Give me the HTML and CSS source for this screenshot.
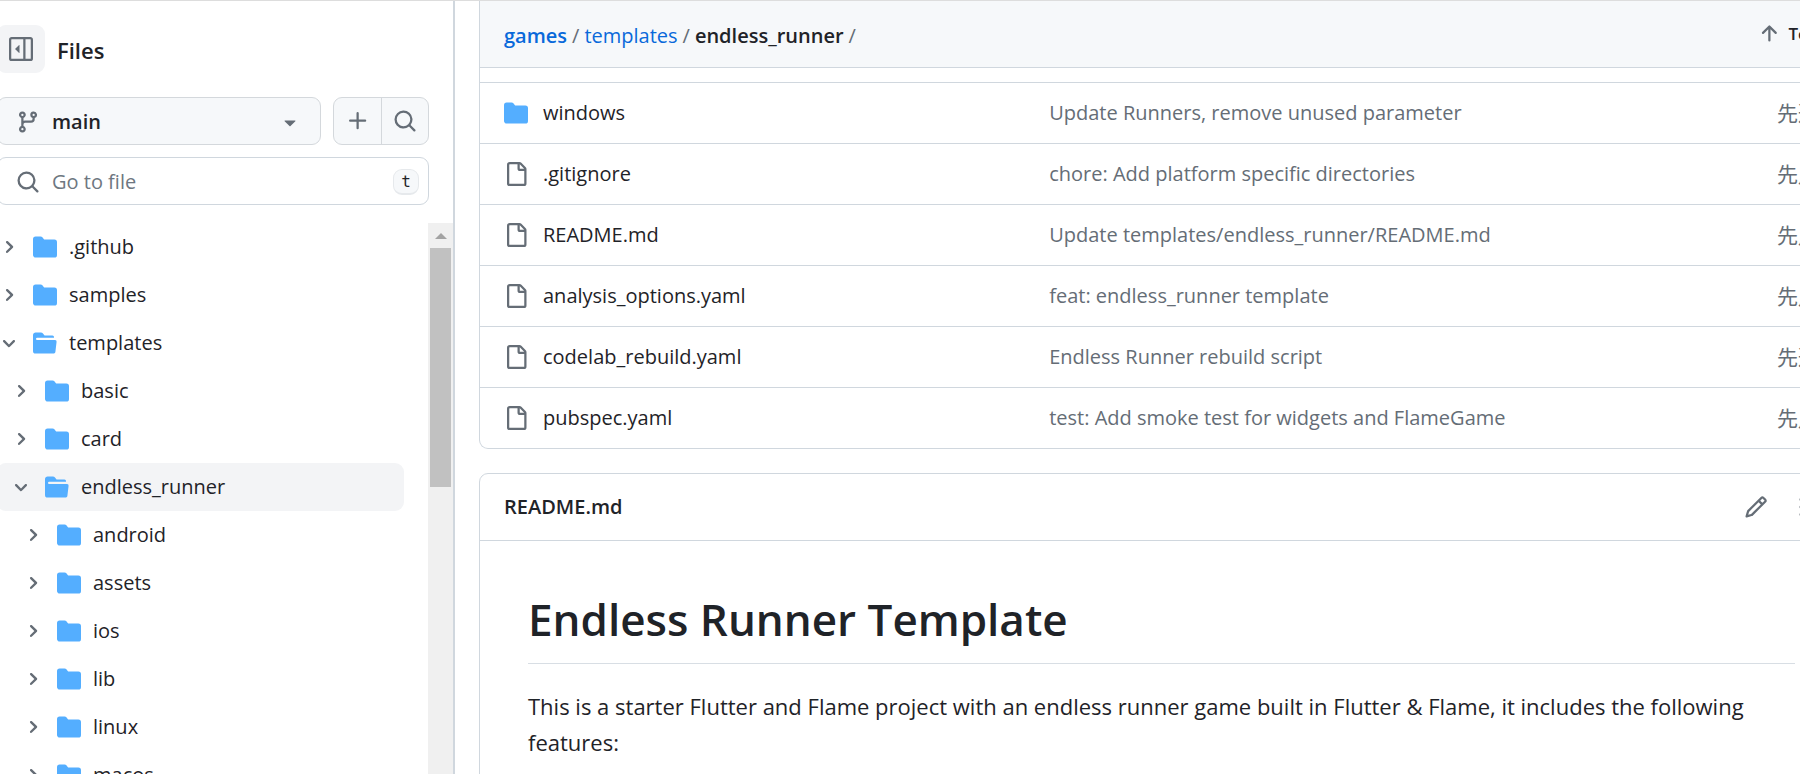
FILE: index.html
```
<!DOCTYPE html>
<html lang="en">
<head>
<meta charset="UTF-8">
<meta name="viewport" content="width=device-width, initial-scale=1.0">
<title>games/templates/endless_runner</title>
<link rel="stylesheet" href="styles.css">
</head>
<body>

<svg class="sprite" aria-hidden="true">
  <symbol id="i-sidebar" viewBox="0 0 16 16"><path d="m4.177 7.823 2.396-2.396A.25.25 0 0 1 7 5.604v4.792a.25.25 0 0 1-.427.177L4.177 8.177a.25.25 0 0 1 0-.354Z"/><path d="M0 1.75C0 .784.784 0 1.75 0h12.5C15.216 0 16 .784 16 1.75v12.5A1.75 1.75 0 0 1 14.25 16H1.75A1.75 1.75 0 0 1 0 14.25Zm1.75-.25a.25.25 0 0 0-.25.25v12.5c0 .138.112.25.25.25H9.5v-13Zm12.5 13a.25.25 0 0 0 .25-.25V1.75a.25.25 0 0 0-.25-.25H11v13Z"/></symbol>
  <symbol id="i-branch" viewBox="0 0 16 16"><path d="M9.5 3.25a2.25 2.25 0 1 1 3 2.122V6A2.5 2.5 0 0 1 10 8.5H6a1 1 0 0 0-1 1v1.128a2.251 2.251 0 1 1-1.5 0V5.372a2.25 2.25 0 1 1 1.5 0v1.836A2.493 2.493 0 0 1 6 7h4a1 1 0 0 0 1-1v-.628A2.25 2.25 0 0 1 9.5 3.25Zm-6 0a.75.75 0 1 0 1.5 0 .75.75 0 0 0-1.5 0Zm8.25-.75a.75.75 0 1 0 0 1.5.75.75 0 0 0 0-1.5ZM4.25 12a.75.75 0 1 0 0 1.5.75.75 0 0 0 0-1.5Z"/></symbol>
  <symbol id="i-caret" viewBox="0 0 16 16"><path d="m4.427 7.427 3.396 3.396a.25.25 0 0 0 .354 0l3.396-3.396A.25.25 0 0 0 11.396 7H4.604a.25.25 0 0 0-.177.427Z"/></symbol>
  <symbol id="i-plus" viewBox="0 0 16 16"><path d="M7.75 2a.75.75 0 0 1 .75.75V7h4.25a.75.75 0 0 1 0 1.5H8.5v4.25a.75.75 0 0 1-1.5 0V8.5H2.75a.75.75 0 0 1 0-1.5H7V2.75A.75.75 0 0 1 7.75 2Z"/></symbol>
  <symbol id="i-search" viewBox="0 0 16 16"><path d="M10.68 11.74a6 6 0 0 1-7.922-8.982 6 6 0 0 1 8.982 7.922l3.04 3.04a.749.749 0 0 1-.326 1.275.749.749 0 0 1-.734-.215ZM11.5 7a4.499 4.499 0 1 0-8.997 0A4.499 4.499 0 0 0 11.5 7Z"/></symbol>
  <symbol id="i-right" viewBox="0 0 12 12"><path d="M4.7 10c-.2 0-.4-.1-.5-.2-.3-.3-.3-.8 0-1.1L6.9 6 4.2 3.3c-.3-.3-.3-.8 0-1.1.3-.3.8-.3 1.1 0l3.3 3.2c.3.3.3.8 0 1.1L5.3 9.7c-.2.2-.4.3-.6.3Z"/></symbol>
  <symbol id="i-down" viewBox="0 0 12 12"><path d="M6 8.825c-.2 0-.4-.1-.5-.2l-3.3-3.3c-.3-.3-.3-.8 0-1.1.3-.3.8-.3 1.1 0l2.7 2.7 2.7-2.7c.3-.3.8-.3 1.1 0 .3.3.3.8 0 1.1l-3.2 3.2c-.2.2-.4.3-.6.3Z"/></symbol>
  <symbol id="i-folder" viewBox="0 0 16 16"><path d="M1.75 1A1.75 1.75 0 0 0 0 2.75v10.5C0 14.216.784 15 1.75 15h12.5A1.75 1.75 0 0 0 16 13.25v-8.5A1.75 1.75 0 0 0 14.25 3H7.5a.25.25 0 0 1-.2-.1l-.9-1.2C6.07 1.26 5.55 1 5 1H1.75Z"/></symbol>
  <symbol id="i-folder-open" viewBox="0 0 16 16"><path d="M.513 1.513A1.75 1.75 0 0 1 1.75 1h3.5c.55 0 1.07.26 1.4.7l.9 1.2a.25.25 0 0 0 .2.1H13a1 1 0 0 1 1 1v.5H2.75a.75.75 0 0 0 0 1.5h11.978a1 1 0 0 1 .994 1.117L15 13.25A1.75 1.75 0 0 1 13.25 15H1.75A1.75 1.75 0 0 1 0 13.25V2.75c0-.464.184-.91.513-1.237Z"/></symbol>
  <symbol id="i-file" viewBox="0 0 16 16"><path d="M2 1.75C2 .784 2.784 0 3.75 0h6.586c.464 0 .909.184 1.237.513l2.914 2.914c.329.328.513.773.513 1.237v9.586A1.75 1.75 0 0 1 13.25 16h-9.5A1.75 1.75 0 0 1 2 14.25Zm1.75-.25a.25.25 0 0 0-.25.25v12.5c0 .138.112.25.25.25h9.5a.25.25 0 0 0 .25-.25V6h-2.75A1.75 1.75 0 0 1 9 4.25V1.5Zm6.75.062V4.25c0 .138.112.25.25.25h2.688l-.011-.013-2.914-2.914-.013-.011Z"/></symbol>
  <symbol id="i-up" viewBox="0 0 16 16"><path d="M3.47 7.78a.75.75 0 0 1 0-1.06l4.25-4.25a.75.75 0 0 1 1.06 0l4.25 4.25a.751.751 0 0 1-.018 1.042.751.751 0 0 1-1.042.018L9 4.81v7.44a.75.75 0 0 1-1.5 0V4.81L4.53 7.78a.75.75 0 0 1-1.06 0Z"/></symbol>
  <symbol id="i-pencil" viewBox="0 0 16 16"><path d="M11.013 1.427a1.75 1.75 0 0 1 2.474 0l1.086 1.086a1.75 1.75 0 0 1 0 2.474l-8.61 8.61c-.21.21-.47.364-.756.445l-3.251.93a.75.75 0 0 1-.927-.928l.929-3.25c.081-.286.235-.547.445-.758l8.61-8.61Zm.176 4.823L9.75 4.81l-6.286 6.287a.253.253 0 0 0-.064.108l-.558 1.953 1.953-.558a.249.249 0 0 0 .108-.064Zm1.238-3.763a.25.25 0 0 0-.354 0L10.811 3.75l1.439 1.44 1.263-1.263a.25.25 0 0 0 0-.354Z"/></symbol>
  <symbol id="i-list" viewBox="0 0 16 16"><path d="M5.75 2.5h8.5a.75.75 0 0 1 0 1.5h-8.5a.75.75 0 0 1 0-1.5Zm0 5h8.5a.75.75 0 0 1 0 1.5h-8.5a.75.75 0 0 1 0-1.5Zm0 5h8.5a.75.75 0 0 1 0 1.5h-8.5a.75.75 0 0 1 0-1.5ZM2 14a1 1 0 1 1 0-2 1 1 0 0 1 0 2Zm1-6a1 1 0 1 1-2 0 1 1 0 0 1 2 0ZM2 4a1 1 0 1 1 0-2 1 1 0 0 1 0 2Z"/></symbol>
</svg>

<div class="app">
  <aside class="sidebar">
    <div class="sidebar-title">
      <button class="toggle" aria-label="Collapse file tree"><svg class="icon"><use href="#i-sidebar"/></svg></button>
      <h2>Files</h2>
    </div>

    <div class="branch-row">
      <button class="branch">
        <svg class="icon"><use href="#i-branch"/></svg>
        <span>main</span>
        <svg class="icon"><use href="#i-caret"/></svg>
      </button>
      <div class="btn-group">
        <button aria-label="Add file"><svg class="icon"><use href="#i-plus"/></svg></button>
        <button aria-label="Search this repository"><svg class="icon"><use href="#i-search"/></svg></button>
      </div>
    </div>

    <label class="search">
      <svg class="icon"><use href="#i-search"/></svg>
      <input type="text" placeholder="Go to file" aria-label="Go to file">
      <kbd>t</kbd>
    </label>

    <div class="tree-wrap">
      <nav class="tree">
        <a href="#" class="item"><svg class="chevron"><use href="#i-right"/></svg><svg class="icon folder"><use href="#i-folder"/></svg>.github</a>
        <a href="#" class="item"><svg class="chevron"><use href="#i-right"/></svg><svg class="icon folder"><use href="#i-folder"/></svg>samples</a>
        <a href="#" class="item"><svg class="chevron"><use href="#i-down"/></svg><svg class="icon folder"><use href="#i-folder-open"/></svg>templates</a>
        <a href="#" class="item level-2"><svg class="chevron"><use href="#i-right"/></svg><svg class="icon folder"><use href="#i-folder"/></svg>basic</a>
        <a href="#" class="item level-2"><svg class="chevron"><use href="#i-right"/></svg><svg class="icon folder"><use href="#i-folder"/></svg>card</a>
        <a href="#" class="item level-2 current"><svg class="chevron"><use href="#i-down"/></svg><svg class="icon folder"><use href="#i-folder-open"/></svg>endless_runner</a>
        <a href="#" class="item level-3"><svg class="chevron"><use href="#i-right"/></svg><svg class="icon folder"><use href="#i-folder"/></svg>android</a>
        <a href="#" class="item level-3"><svg class="chevron"><use href="#i-right"/></svg><svg class="icon folder"><use href="#i-folder"/></svg>assets</a>
        <a href="#" class="item level-3"><svg class="chevron"><use href="#i-right"/></svg><svg class="icon folder"><use href="#i-folder"/></svg>ios</a>
        <a href="#" class="item level-3"><svg class="chevron"><use href="#i-right"/></svg><svg class="icon folder"><use href="#i-folder"/></svg>lib</a>
        <a href="#" class="item level-3"><svg class="chevron"><use href="#i-right"/></svg><svg class="icon folder"><use href="#i-folder"/></svg>linux</a>
        <a href="#" class="item level-3"><svg class="chevron"><use href="#i-right"/></svg><svg class="icon folder"><use href="#i-folder"/></svg>macos</a>
      </nav>
      <div class="scrollbar">
        <div class="scroll-arrow"></div>
        <div class="scroll-thumb"></div>
      </div>
    </div>
  </aside>

  <main class="content">
    <section class="listing">
      <header class="path-bar">
        <nav class="breadcrumb">
          <a href="#" class="repo">games</a>
          <span>/</span>
          <a href="#">templates</a>
          <span>/</span>
          <h1>endless_runner</h1>
          <span>/</span>
        </nav>
        <button class="top-btn"><svg class="icon"><use href="#i-up"/></svg>Top</button>
      </header>
      <table class="files">
        <tbody>
          <tr>
            <td class="name"><div><svg class="icon folder"><use href="#i-folder"/></svg><a href="#">windows</a></div></td>
            <td><a href="#">Update Runners, remove unused parameter</a></td>
            <td class="date">先週</td>
          </tr>
          <tr>
            <td class="name"><div><svg class="icon"><use href="#i-file"/></svg><a href="#">.gitignore</a></div></td>
            <td><a href="#">chore: Add platform specific directories</a></td>
            <td class="date">先月</td>
          </tr>
          <tr>
            <td class="name"><div><svg class="icon"><use href="#i-file"/></svg><a href="#">README.md</a></div></td>
            <td><a href="#">Update templates/endless_runner/README.md</a></td>
            <td class="date">先月</td>
          </tr>
          <tr>
            <td class="name"><div><svg class="icon"><use href="#i-file"/></svg><a href="#">analysis_options.yaml</a></div></td>
            <td><a href="#">feat: endless_runner template</a></td>
            <td class="date">先月</td>
          </tr>
          <tr>
            <td class="name"><div><svg class="icon"><use href="#i-file"/></svg><a href="#">codelab_rebuild.yaml</a></div></td>
            <td><a href="#">Endless Runner rebuild script</a></td>
            <td class="date">先週</td>
          </tr>
          <tr>
            <td class="name"><div><svg class="icon"><use href="#i-file"/></svg><a href="#">pubspec.yaml</a></div></td>
            <td><a href="#">test: Add smoke test for widgets and FlameGame</a></td>
            <td class="date">先月</td>
          </tr>
        </tbody>
      </table>
    </section>

    <section class="readme">
      <header class="readme-bar">
        <h2>README.md</h2>
        <div class="actions">
          <button aria-label="Edit file"><svg class="icon"><use href="#i-pencil"/></svg></button>
          <button aria-label="Outline"><svg class="icon"><use href="#i-list"/></svg></button>
        </div>
      </header>
      <article class="markdown">
        <h1>Endless Runner Template</h1>
        <p>This is a starter Flutter and Flame project with an endless runner game built in Flutter &amp; Flame, it includes the following features:</p>
      </article>
    </section>
  </main>
</div>

</body>
</html>
```

FILE: styles.css
```
* {
  box-sizing: border-box;
}
body {
  margin: 0;
  overflow: hidden;
  font-family: "Open Sans", "Noto Sans CJK JP", sans-serif;
  font-size: 20px;
  line-height: 30px;
  color: #1f2328;
  background-color: #fff;
}
h1, h2, p {
  margin: 0;
}
h1, h2 {
  font-size: 20px;
  font-weight: 600;
}
a {
  color: inherit;
  text-decoration: none;
}
button, input {
  font: inherit;
  color: inherit;
}
button {
  display: flex;
  align-items: center;
  justify-content: center;
  padding: 0;
  border: none;
  background: none;
  cursor: pointer;
}
.sprite {
  display: none;
}
.icon {
  width: 24px;
  height: 24px;
  flex: none;
  fill: #656d76;
}
.folder {
  fill: #54aeff;
}

/* the page is wider than the window and scrolled a little to the right */
.app {
  display: flex;
  height: 100vh;
  margin: 0 -44px 0 -27px;
  border-top: 1px solid #ddd;
}

/* sidebar */
.sidebar {
  display: flex;
  flex-direction: column;
  flex: none;
  width: 482px;
  padding: 24px 0 0 24px;
  border-right: 2px solid #d0d7de;
}
.sidebar-title {
  display: flex;
  align-items: center;
  gap: 12px;
  margin-bottom: 24px;
}
.sidebar-title h2 {
  padding-top: 2px;
  font-size: 22px;
}
.toggle {
  width: 48px;
  height: 48px;
  border-radius: 9px;
  background-color: #f3f4f6;
}
.branch-row {
  display: flex;
  gap: 12px;
  margin: 0 24px 12px 0;
}
.branch {
  flex: 1;
  gap: 12px;
  height: 48px;
  padding: 2px 18px 0;
  border: 1px solid #d4d8dc;
  border-radius: 9px;
  background-color: #f6f8fa;
  font-weight: 600;
}
.branch span {
  flex: 1;
  text-align: left;
}
.btn-group {
  display: flex;
  height: 48px;
  border: 1px solid #d4d8dc;
  border-radius: 9px;
  background-color: #f6f8fa;
}
.btn-group button {
  width: 47px;
}
.btn-group button + button {
  border-left: 1px solid #d4d8dc;
}
.search {
  display: flex;
  align-items: center;
  gap: 12px;
  height: 48px;
  margin: 0 24px 18px 0;
  padding: 2px 9px 0 18px;
  border: 1px solid #d0d7de;
  border-radius: 9px;
}
.search input {
  flex: 1;
  min-width: 0;
  padding: 0;
  border: none;
  outline: none;
  background: none;
}
.search input::placeholder {
  color: #6e7781;
  opacity: 1;
}
kbd {
  width: 26px;
  height: 26px;
  border: 1px solid #e6e9ec;
  border-bottom-width: 2px;
  border-radius: 9px;
  background-color: #f6f8fa;
  font-family: "DejaVu Sans Mono", monospace;
  font-size: 16px;
  line-height: 23px;
  text-align: center;
}
.tree-wrap {
  display: flex;
  flex: 1;
  min-height: 0;
}
.tree {
  flex: 1;
  margin-right: 24px;
  overflow: hidden;
}
.item {
  display: flex;
  align-items: center;
  height: 48px;
  padding-left: 3px;
  border-radius: 9px;
}
.level-2 {
  padding-left: 15px;
}
.level-3 {
  padding-left: 27px;
}
.current {
  background-color: #f3f4f6;
}
.chevron {
  width: 18px;
  height: 18px;
  margin-right: 15px;
  fill: #656d76;
}
.item .icon {
  margin-right: 12px;
}
.scrollbar {
  width: 25px;
  background-color: #f0f0f0;
}
.scroll-arrow {
  height: 25px;
  padding-top: 10px;
}
.scroll-arrow::before {
  content: "";
  display: block;
  width: 0;
  margin: 0 auto;
  border: 6px solid transparent;
  border-top: none;
  border-bottom-color: #a3a3a3;
}
.scroll-thumb {
  height: 239px;
  margin: 0 2px;
  background-color: #c1c1c1;
}

/* file listing */
.content {
  flex: 1;
  min-width: 0;
  margin-left: 24px;
}
.listing {
  margin-bottom: 24px;
  border: 1px solid #d0d7de;
  border-top: none;
  border-radius: 0 0 9px 9px;
}
.path-bar {
  display: flex;
  align-items: center;
  justify-content: space-between;
  height: 67px;
  margin-bottom: 14px;
  padding: 0 12px 0 24px;
  border-bottom: 1px solid #d0d7de;
  background-color: #f6f8fa;
}
.breadcrumb {
  display: flex;
  gap: 5px;
  padding-top: 3px;
}
.breadcrumb a {
  color: #0969da;
}
.breadcrumb .repo {
  font-weight: 600;
}
.breadcrumb span {
  color: #656d76;
}
.top-btn {
  gap: 7px;
  padding: 0 12px;
  font-size: 17px;
  font-weight: 600;
}
.files {
  width: 100%;
  border-spacing: 0;
  table-layout: fixed;
}
.files td {
  height: 61px;
  padding: 0 24px;
  border-top: 1px solid #d0d7de;
  color: #656d76;
}
.files .name {
  width: 40%;
  color: #1f2328;
}
.name div {
  display: flex;
  align-items: center;
  gap: 15px;
}
.files .date {
  width: 136px;
  font-size: 21px;
  text-align: right;
}

/* readme */
.readme {
  border: 1px solid #d0d7de;
  border-radius: 9px 9px 0 0;
}
.readme-bar {
  display: flex;
  align-items: center;
  justify-content: space-between;
  height: 67px;
  padding: 0 12px 0 24px;
  border-bottom: 1px solid #d0d7de;
}
.actions {
  display: flex;
  gap: 12px;
}
.actions button {
  width: 42px;
  height: 42px;
}
.markdown {
  padding: 48px;
  font-size: 22px;
  line-height: 36px;
}
.markdown h1 {
  margin-bottom: 24px;
  padding-bottom: 14px;
  border-bottom: 1px solid #d8dee4;
  font-size: 44px;
  font-weight: 600;
  line-height: 60px;
}
```
